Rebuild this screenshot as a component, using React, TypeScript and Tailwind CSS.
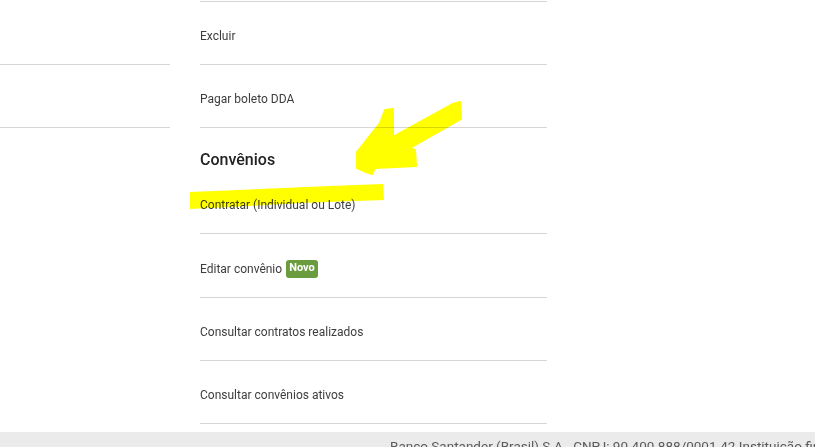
const leftRows = [0, 1];

const topRows = ["Excluir", "Pagar boleto DDA"];

const convenios = [
  { label: "Contratar (Individual ou Lote)" },
  { label: "Editar convênio", badge: "Novo" },
  { label: "Consultar contratos realizados" },
  { label: "Consultar convênios ativos" },
];

function Row({ label, badge }: { label: string; badge?: string }) {
  return (
    <div className="h-[63px] border-b border-[#d6d6d6] flex items-center pt-[5px] text-[12px] text-[#3d3d3d]">
      <span>{label}</span>
      {badge && (
        <span className="ml-[4px] rounded-[3px] bg-[#6a9b3e] px-[3px] h-[18px] flex items-center text-[11px] font-bold text-white">
          {badge}
        </span>
      )}
    </div>
  );
}

export default function App() {
  return (
    <div
      className="relative h-[447px] w-[815px] overflow-hidden bg-white"
      style={{ fontFamily: "Roboto, 'Liberation Sans', sans-serif" }}
    >
      <div className="flex gap-[30px]">
        {/* left column (scrolled) */}
        <div className="w-[170px]">
          {leftRows.map((r) => (
            <div key={r} className="h-[63px] border-b border-[#d6d6d6] first:h-[65px]" />
          ))}
        </div>

        {/* menu column */}
        <div className="w-[347px] mt-[1px] border-t border-[#d6d6d6]">
          {topRows.map((label) => (
            <Row key={label} label={label} />
          ))}
          <h3 className="pt-[22px] h-[43px] text-[16px] leading-[20px] font-medium text-[#222]">
            Convênios
          </h3>
          <Row label={convenios[0].label} />
          {convenios.slice(1).map((c, i) => (
            <div key={c.label} className={i === 0 ? "mt-[1px]" : ""}>
              <Row label={c.label} badge={c.badge} />
            </div>
          ))}
        </div>
      </div>

      {/* footer */}
      <div className="mt-[8px] h-[40px] bg-[#ebebeb] pl-[390px] pt-[4px] text-[13.5px] text-[#5a5a5a] whitespace-nowrap">
        Banco Santander (Brasil) S.A - CNPJ: 90.400.888/0001-42 Instituição financeira
      </div>

      {/* yellow highlighter marks */}
      <svg
        className="absolute left-0 top-0 pointer-events-none mix-blend-multiply"
        width="815"
        height="447"
      >
        <polygon
          points="190,192 260,189 330,186 383,184 384,200 300,203 230,207 190,209"
          fill="#ffff00"
        />
        <polygon
          points="385,110 393,109 393,137 453,104 460,102 461,119 410,148 415,150 416,166 375,168 372,174 366,172 357,168 357,152 380,123"
          fill="#ffff00"
          stroke="#ffff00"
          strokeWidth="2"
          strokeLinejoin="round"
        />
      </svg>
    </div>
  );
}
